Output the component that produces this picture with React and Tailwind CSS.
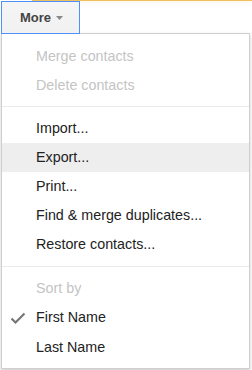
import React from "react";

function Item({ label, disabled, active, checked }) {
  return (
    <div
      className={
        "relative h-[29px] flex items-center pl-[34px] text-[14.3px] leading-none " +
        (disabled ? "text-[#c4c4c4] " : "text-[#222] ") +
        (active ? "bg-[#eeeeee]" : "")
      }
    >
      {checked && (
        <svg
          className="absolute left-[8px] top-[9px]"
          width="16"
          height="12"
          viewBox="0 0 16 12"
        >
          <path
            d="M1.5 6.5 L5.5 10.5 L14.5 1.5"
            fill="none"
            stroke="#777"
            strokeWidth="2.2"
          />
        </svg>
      )}
      <span>{label}</span>
    </div>
  );
}

function Sep() {
  return <div className="mt-[6px] mb-[7px] h-px bg-[#ebebeb]" />;
}

export default function App() {
  return (
    <div
      className="w-[252px] h-[370px] bg-white overflow-hidden"
      style={{ fontFamily: '"Liberation Sans", Arial, sans-serif' }}
    >
      <div className="ml-[32px] h-px bg-[#f0c060] shadow-[0_1px_3px_rgba(240,192,96,0.35)]" />
      <div className="ml-[1px] flex flex-col items-start">
        <div className="relative z-10 w-[79px] h-[33px] border border-[#4d90fe] bg-gradient-to-b from-[#f5f5f5] to-[#f1f1f1] flex items-center pl-[18px] gap-[5px]">
          <span className="text-[13px] font-bold text-[#444] leading-none">More</span>
          <svg width="7" height="4" viewBox="0 0 7 4">
            <path d="M0 0 L7 0 L3.5 4 Z" fill="#888" />
          </svg>
        </div>
        <div className="-mt-px w-[249px] border border-[#cfcfcf] bg-white shadow-[0_2px_4px_rgba(0,0,0,0.2)] pt-[8px] pb-[6px]">
          <Item label="Merge contacts" disabled />
          <Item label="Delete contacts" disabled />
          <Sep />
          <Item label="Import..." />
          <Item label="Export..." active />
          <Item label="Print..." />
          <Item label="Find & merge duplicates..." />
          <Item label="Restore contacts..." />
          <div className="mt-[7px] mb-[7px] h-px bg-[#ebebeb]" />
          <Item label="Sort by" disabled />
          <Item label="First Name" checked />
          <div className="pt-px">
            <Item label="Last Name" />
          </div>
        </div>
      </div>
    </div>
  );
}
